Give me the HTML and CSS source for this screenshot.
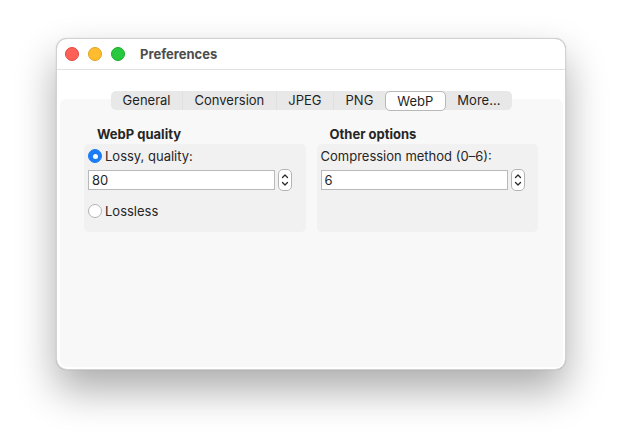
FILE: index.html
```html
<!DOCTYPE html>
<html>
<head>
<meta charset="utf-8">
<link rel="stylesheet" href="styles.css">
</head>
<body>
<div class="window">
  <div class="titlebar">
    <div class="lights">
      <span class="light red"></span>
      <span class="light yellow"></span>
      <span class="light green"></span>
    </div>
    <div class="title">Preferences</div>
  </div>
  <div class="body">
    <div class="tabs">
      <div class="tab">General</div>
      <div class="tab">Conversion</div>
      <div class="tab">JPEG</div>
      <div class="tab">PNG</div>
      <div class="tab selected">WebP</div>
      <div class="tab last">More...</div>
    </div>
    <div class="panel">
      <div class="groups">
        <div class="group">
          <div class="group-title">WebP quality</div>
          <div class="group-box">
            <label class="radio-row"><span class="radio on"></span>Lossy, quality:</label>
            <div class="field-row">
              <div class="input">80</div>
              <svg class="stepper" width="14" height="22" viewBox="0 0 14 22"><rect x="0.5" y="0.5" width="13" height="21" rx="4.5" fill="#fff" stroke="#b4b4b4"/><path d="M4.5 8.5 L7 6 L9.5 8.5" fill="none" stroke="#2a2a2a" stroke-width="1.3" stroke-linecap="round" stroke-linejoin="round"/><path d="M4.5 13.5 L7 16 L9.5 13.5" fill="none" stroke="#2a2a2a" stroke-width="1.3" stroke-linecap="round" stroke-linejoin="round"/></svg>
            </div>
            <label class="radio-row lossless"><span class="radio"></span>Lossless</label>
          </div>
        </div>
        <div class="group">
          <div class="group-title">Other options</div>
          <div class="group-box">
            <div class="text-row">Compression method (0–6):</div>
            <div class="field-row">
              <div class="input">6</div>
              <svg class="stepper" width="14" height="22" viewBox="0 0 14 22"><rect x="0.5" y="0.5" width="13" height="21" rx="4.5" fill="#fff" stroke="#b4b4b4"/><path d="M4.5 8.5 L7 6 L9.5 8.5" fill="none" stroke="#2a2a2a" stroke-width="1.3" stroke-linecap="round" stroke-linejoin="round"/><path d="M4.5 13.5 L7 16 L9.5 13.5" fill="none" stroke="#2a2a2a" stroke-width="1.3" stroke-linecap="round" stroke-linejoin="round"/></svg>
            </div>
          </div>
        </div>
      </div>
    </div>
  </div>
</div>
</body>
</html>
```
FILE: styles.css
```css
html, body {
  margin: 0;
  padding: 0;
  background: #ffffff;
}
html {
  height: 444px;
}
body {
  box-sizing: border-box;
  height: 444px;
  padding: 38px 0 0 56px;
  font-family: "Inter", "Liberation Sans", sans-serif;
  font-size: 13px;
  color: #262626;
}
.window {
  width: 510px;
  height: 332px;
  box-sizing: border-box;
  background: #ffffff;
  border: 1px solid #d2d2d2;
  border-radius: 11px;
  box-shadow: 0 20px 40px rgba(0, 0, 0, 0.33), 0 0 1px rgba(0, 0, 0, 0.25);
  display: flex;
  flex-direction: column;
  overflow: hidden;
}
.titlebar {
  height: 31px;
  flex: none;
  box-sizing: border-box;
  border-bottom: 1px solid #e1e1e1;
  display: flex;
  align-items: center;
  padding-left: 8px;
}
.lights {
  display: flex;
  gap: 9px;
}
.light {
  width: 14px;
  height: 14px;
  border-radius: 50%;
  box-sizing: border-box;
}
.red { background: #fe5f57; border: 0.5px solid #e2463f; }
.yellow { background: #febc2e; border: 0.5px solid #dea123; }
.green { background: #28c840; border: 0.5px solid #1aab29; }
.title {
  margin-left: 15px;
  font-weight: 700;
  color: #4d4d4d;
  font-size: 13px;
}
.body {
  flex: 1;
  display: flex;
  flex-direction: column;
  padding: 21px 2px 2px 3px;
}
.tabs {
  position: relative;
  z-index: 1;
  align-self: center;
  display: flex;
  height: 19px;
  background: #e8e8e8;
  border-radius: 5px;
}
.tab {
  display: flex;
  align-items: center;
  justify-content: center;
  padding: 0 11.5px;
  line-height: 19px;
  color: #1f1f1f;
  border-right: 1px solid #e0e0e0;
}
.tab.last, .tab.selected { border-right: none; }
.tab:nth-child(4) { border-right: none; }
.tab.selected {
  background: #ffffff;
  border: 1px solid #b8b8b8;
  border-radius: 5px;
  box-sizing: border-box;
  height: 20px;
}
.panel {
  flex: 1;
  margin-top: -11px;
  background: #f8f8f8;
  border-radius: 6px;
  padding: 27px 25px 0 24px;
}
.groups {
  display: flex;
  gap: 11px;
}
.group {
  flex: 1;
  display: flex;
  flex-direction: column;
}
.group-title {
  font-weight: 700;
  padding-left: 13px;
  height: 18px;
  line-height: 17px;
}
.group-box {
  background: #f1f1f1;
  border-radius: 5px;
  height: 88px;
  box-sizing: border-box;
  padding: 5px 4px 0 4px;
}
.radio-row {
  display: flex;
  align-items: center;
  height: 14px;
  gap: 3px;
}
.radio {
  width: 14px;
  height: 14px;
  border-radius: 50%;
  box-sizing: border-box;
  background: #ffffff;
  border: 1px solid #b3b3b3;
  display: flex;
  align-items: center;
  justify-content: center;
}
.radio.on {
  background: #1b7cf5;
  border-color: #1b7cf5;
}
.radio.on::after {
  content: "";
  width: 5px;
  height: 5px;
  border-radius: 50%;
  background: #ffffff;
}
.text-row {
  height: 14px;
  line-height: 14px;
}
.field-row {
  display: flex;
  align-items: center;
  gap: 3px;
  margin-top: 6px;
}
.input {
  width: 187px;
  height: 20px;
  box-sizing: border-box;
  background: #ffffff;
  border: 1px solid #b9b9b9;
  padding-left: 3px;
  line-height: 18px;
}
.stepper {
  display: block;
  flex: none;
}
.lossless {
  margin-top: 13px;
}
```
